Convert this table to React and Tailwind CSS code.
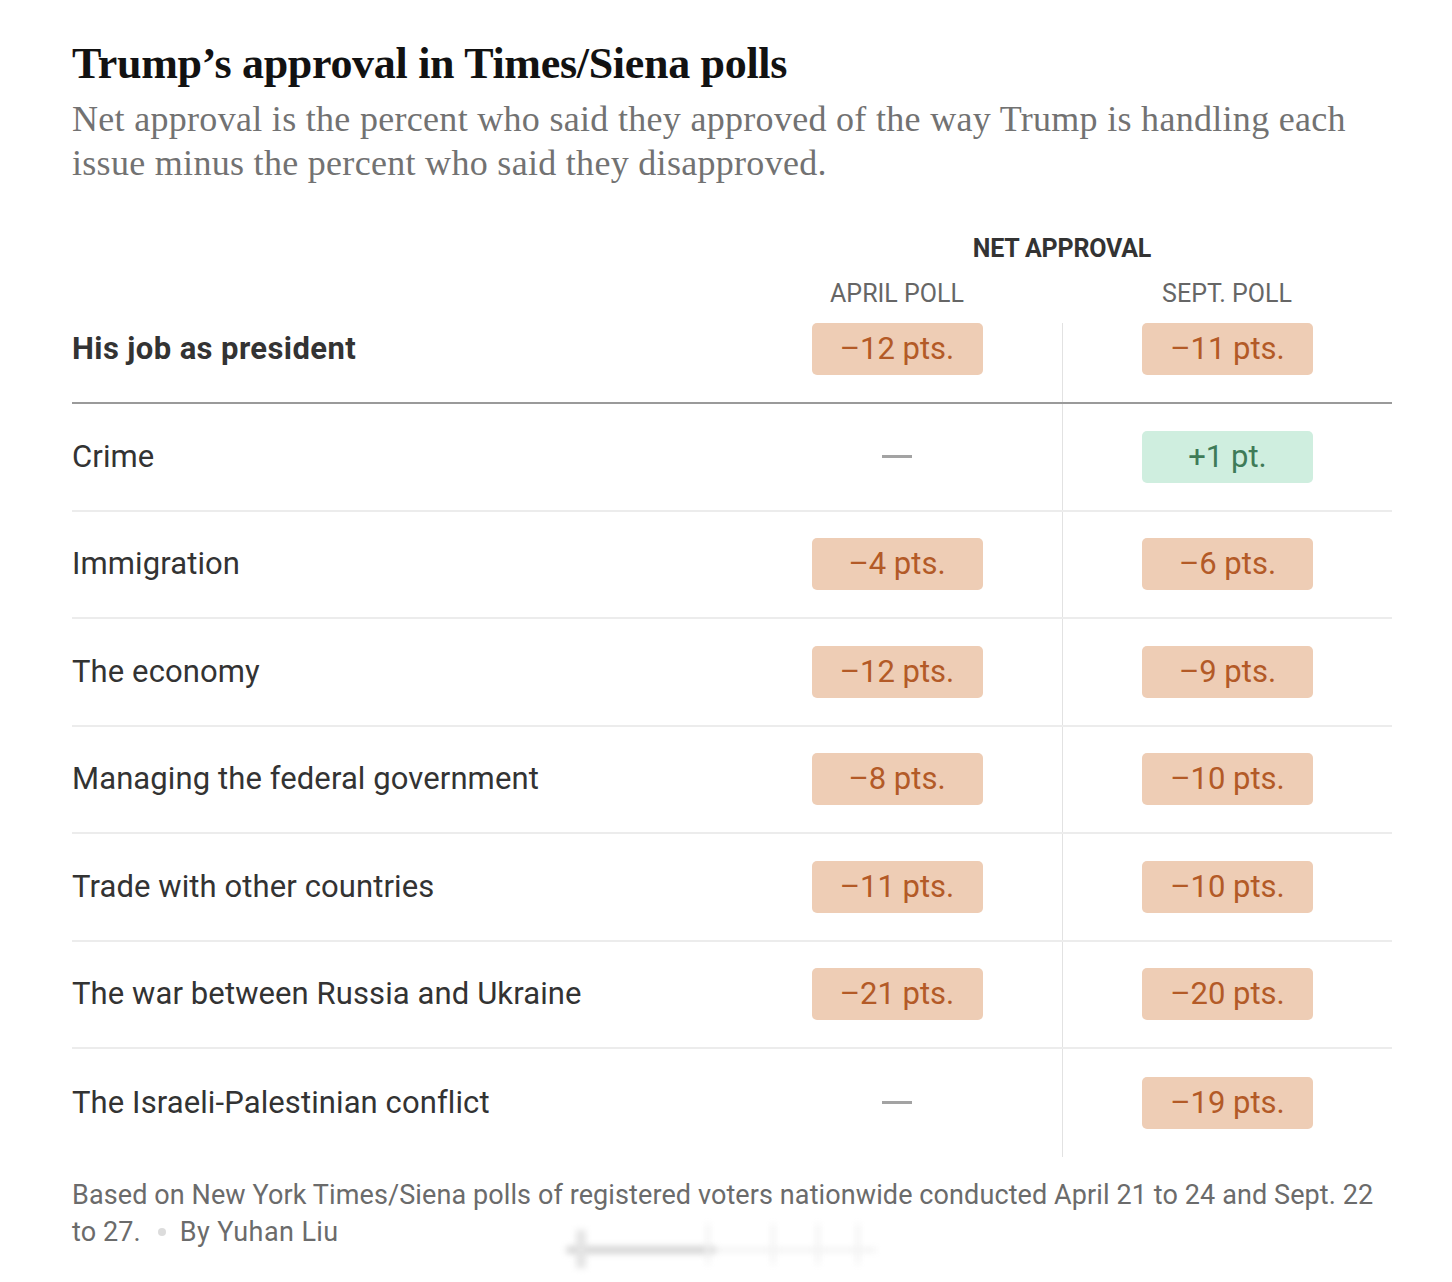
import React from "react";

const rows = [
  ["Crime", null, { v: "+1 pt.", pos: true }],
  ["Immigration", { v: "\u20134 pts." }, { v: "\u20136 pts." }],
  ["The economy", { v: "\u201312 pts." }, { v: "\u20139 pts." }],
  ["Managing the federal government", { v: "\u20138 pts." }, { v: "\u201310 pts." }],
  ["Trade with other countries", { v: "\u201311 pts." }, { v: "\u201310 pts." }],
  ["The war between Russia and Ukraine", { v: "\u201321 pts." }, { v: "\u201320 pts." }],
  ["The Israeli-Palestinian conflict", null, { v: "\u201319 pts." }],
];

const sans = { fontFamily: "Roboto, 'Liberation Sans', sans-serif" };

function Pill({ d }) {
  if (!d) return <span className="block w-[30px] h-[3px] bg-[#a3a3a3]" />;
  return (
    <div
      className={
        "w-[171px] h-[52px] rounded-[5px] flex items-center justify-center text-[31px] tracking-[0px] " +
        (d.pos ? "bg-[#cfeedf] text-[#3f7b58]" : "bg-[#eecdb5] text-[#b35a27]")
      }
    >
      {d.v}
    </div>
  );
}

export default function App() {
  return (
    <div className="relative bg-white w-[1452px] h-[1282px] pl-[72px] pr-[60px] pt-[38px]">
      <h1
        className="text-[44px] font-bold leading-[52px] text-[#121212] tracking-[-0.3px]"
        style={{ fontFamily: "'Liberation Serif', serif" }}
      >
        Trump’s approval in Times/Siena polls
      </h1>
      <p
        className="w-[1330px] text-[36px] leading-[44px] text-[#727272] mt-[7px] tracking-[0.3px] whitespace-nowrap"
        style={{ fontFamily: "'Liberation Serif', serif" }}
      >
        Net approval is the percent who said they approved of the way Trump is handling each
        <br />
        issue minus the percent who said they disapproved.
      </p>

      <div className="w-[1320px] mt-[49px]" style={sans}>
        <div className="grid grid-cols-[660px_330px_330px]">
          <div />
          <div className="col-span-2 text-center text-[25px] font-bold text-[#333] tracking-[-0.2px] leading-[30px] h-[30px]">
            NET APPROVAL
          </div>
          <div />
          <div className="text-center text-[25px] text-[#666] tracking-[0px] leading-[30px] mt-[15px]">
            APRIL POLL
          </div>
          <div className="text-center text-[25px] text-[#666] tracking-[0px] leading-[30px] mt-[15px]">
            SEPT. POLL
          </div>
        </div>

        <div className="grid grid-cols-[660px_330px_330px] border-b-2 border-[#9a9a9a] mt-[14px]">
          <div className="flex items-center h-[52px] text-[31px] font-bold text-[#333] tracking-[0.4px]">
            His job as president
          </div>
          <div className="flex items-center justify-center">
            <Pill d={{ v: "\u201312 pts." }} />
          </div>
          <div className="flex items-center justify-center border-l border-[#e2e2e2]">
            <Pill d={{ v: "\u201311 pts." }} />
          </div>
          <div className="h-[27px]" />
          <div className="h-[27px]" />
          <div className="h-[27px] border-l border-[#e2e2e2]" />
        </div>

        {rows.map(([label, a, b], i) => (
          <div
            key={label}
            className={
              "grid grid-cols-[660px_330px_330px] h-[107.5px] " +
              (i < rows.length - 1 ? "border-b-2 border-[#ececec]" : "")
            }
          >
            <div className="flex items-center text-[31px] text-[#333] tracking-[0.1px]">{label}</div>
            <div className="flex items-center justify-center">
              <Pill d={a} />
            </div>
            <div className="flex items-center justify-center border-l border-[#e2e2e2]">
              <Pill d={b} />
            </div>
          </div>
        ))}

        <div className="text-[27px] leading-[37px] text-[#6b6b6b] mt-[20px] tracking-[0.1px] w-[1330px]">
          <div className="whitespace-nowrap">
            Based on New York Times/Siena polls of registered voters nationwide conducted April 21 to 24 and Sept. 22
          </div>
          <div className="flex items-center whitespace-nowrap">
            <span>to 27.</span>
            <span className="inline-block w-[8px] h-[8px] rounded-full bg-[#dcdcdc] ml-[17px] mr-[14px]" />
            <span className="tracking-[0.4px]">By Yuhan Liu</span>
          </div>
        </div>
      </div>

      <div className="absolute left-[566px] top-[1218px] w-[320px] h-[52px] pointer-events-none blur-[3px]">
        <div className="absolute left-0 top-[28px] w-[150px] h-[8px] bg-[#d6d6d6] rounded-full" />
        <div className="absolute left-[10px] top-[12px] w-[10px] h-[38px] bg-[#e4e4e4]" />
        <div className="absolute left-[150px] top-[30px] w-[160px] h-[4px] bg-[#f0f0f0]" />
        <div className="absolute left-[140px] top-[6px] w-[4px] h-[40px] bg-[#f2f2f2]" />
        <div className="absolute left-[205px] top-[6px] w-[4px] h-[40px] bg-[#f2f2f2]" />
        <div className="absolute left-[250px] top-[6px] w-[4px] h-[40px] bg-[#f2f2f2]" />
        <div className="absolute left-[290px] top-[6px] w-[4px] h-[40px] bg-[#f2f2f2]" />
      </div>
    </div>
  );
}
